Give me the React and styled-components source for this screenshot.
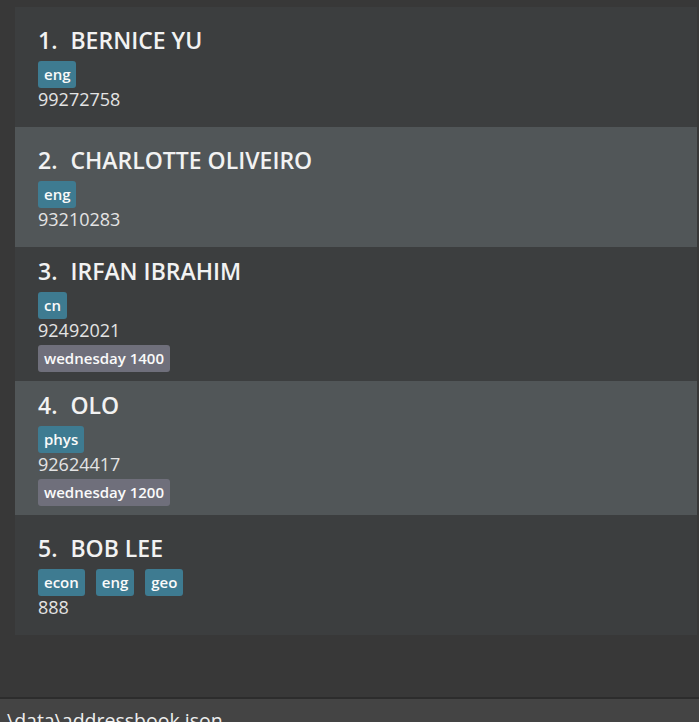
import React from 'react';
import styled, {createGlobalStyle} from 'styled-components';

const GlobalStyle = createGlobalStyle`
  html, body {
    margin: 0;
    padding: 0;
    background: #383838;
    overflow: hidden;
  }
  * {
    box-sizing: border-box;
  }
`;

const Window = styled.div`
  display: flex;
  flex-direction: column;
  width: 699px;
  height: 722px;
  background: #383838;
  font-family: "Open Sans", "Noto Sans", sans-serif;
`;

const ListArea = styled.div`
  flex: 1;
  padding: 7px 2px 0 15px;
`;

const PersonList = styled.div`
  display: flex;
  flex-direction: column;
`;

const Cell = styled.div`
  display: flex;
  flex-direction: column;
  justify-content: center;
  min-height: 120px;
  padding: 9px 23px;
  background: ${props => (props.odd ? '#515658' : '#3c3e3f')};
`;

const NameRow = styled.div`
  display: flex;
  gap: 13px;
  height: 30px;
  line-height: 30px;
  font-size: 23px;
  font-weight: 600;
  color: #f2f2f2;
`;

const TagRow = styled.div`
  display: flex;
  gap: 11px;
  margin-top: ${props => props.top || 0}px;
`;

const Tag = styled.span`
  display: inline-block;
  height: 27px;
  line-height: 27px;
  padding: 0 6px;
  border-radius: 3px;
  font-size: 15px;
  font-weight: 600;
  color: #fafafa;
  background: ${props => (props.schedule ? '#6f6f7b' : '#3e7b91')};
`;

const Phone = styled.div`
  height: 22px;
  line-height: 22px;
  font-size: 18px;
  color: #e4e4e4;
`;

const StatusBar = styled.div`
  flex-shrink: 0;
  height: 25px;
  border-top: 2px solid #2c2c2c;
  background: #444444;
  overflow: hidden;
  padding: 10px 0 0 7px;
  font-size: 19.5px;
  line-height: 24px;
  color: #eeeeee;
  white-space: nowrap;
`;

const persons = [
  {name: 'BERNICE YU', tags: ['eng'], phone: '99272758'},
  {name: 'CHARLOTTE OLIVEIRO', tags: ['eng'], phone: '93210283'},
  {name: 'IRFAN IBRAHIM', tags: ['cn'], phone: '92492021', lesson: 'wednesday 1400'},
  {name: 'OLO', tags: ['phys'], phone: '92624417', lesson: 'wednesday 1200'},
  {name: 'BOB LEE', tags: ['econ', 'eng', 'geo'], phone: '888'},
];

export default function App() {
  return (
    <Window>
      <GlobalStyle/>
      <ListArea>
        <PersonList>
          {persons.map((p, i) => (
            <Cell key={p.name} odd={i % 2 === 1}>
              <NameRow>
                <span>{(i + 1) + '.'}</span>
                <span>{p.name}</span>
              </NameRow>
              <TagRow top={6}>
                {p.tags.map(t => <Tag key={t}>{t}</Tag>)}
              </TagRow>
              <Phone>{p.phone}</Phone>
              {p.lesson && (
                <TagRow top={4}>
                  <Tag schedule>{p.lesson}</Tag>
                </TagRow>
              )}
            </Cell>
          ))}
        </PersonList>
      </ListArea>
      <StatusBar>\data\addressbook.json</StatusBar>
    </Window>
  );
}
